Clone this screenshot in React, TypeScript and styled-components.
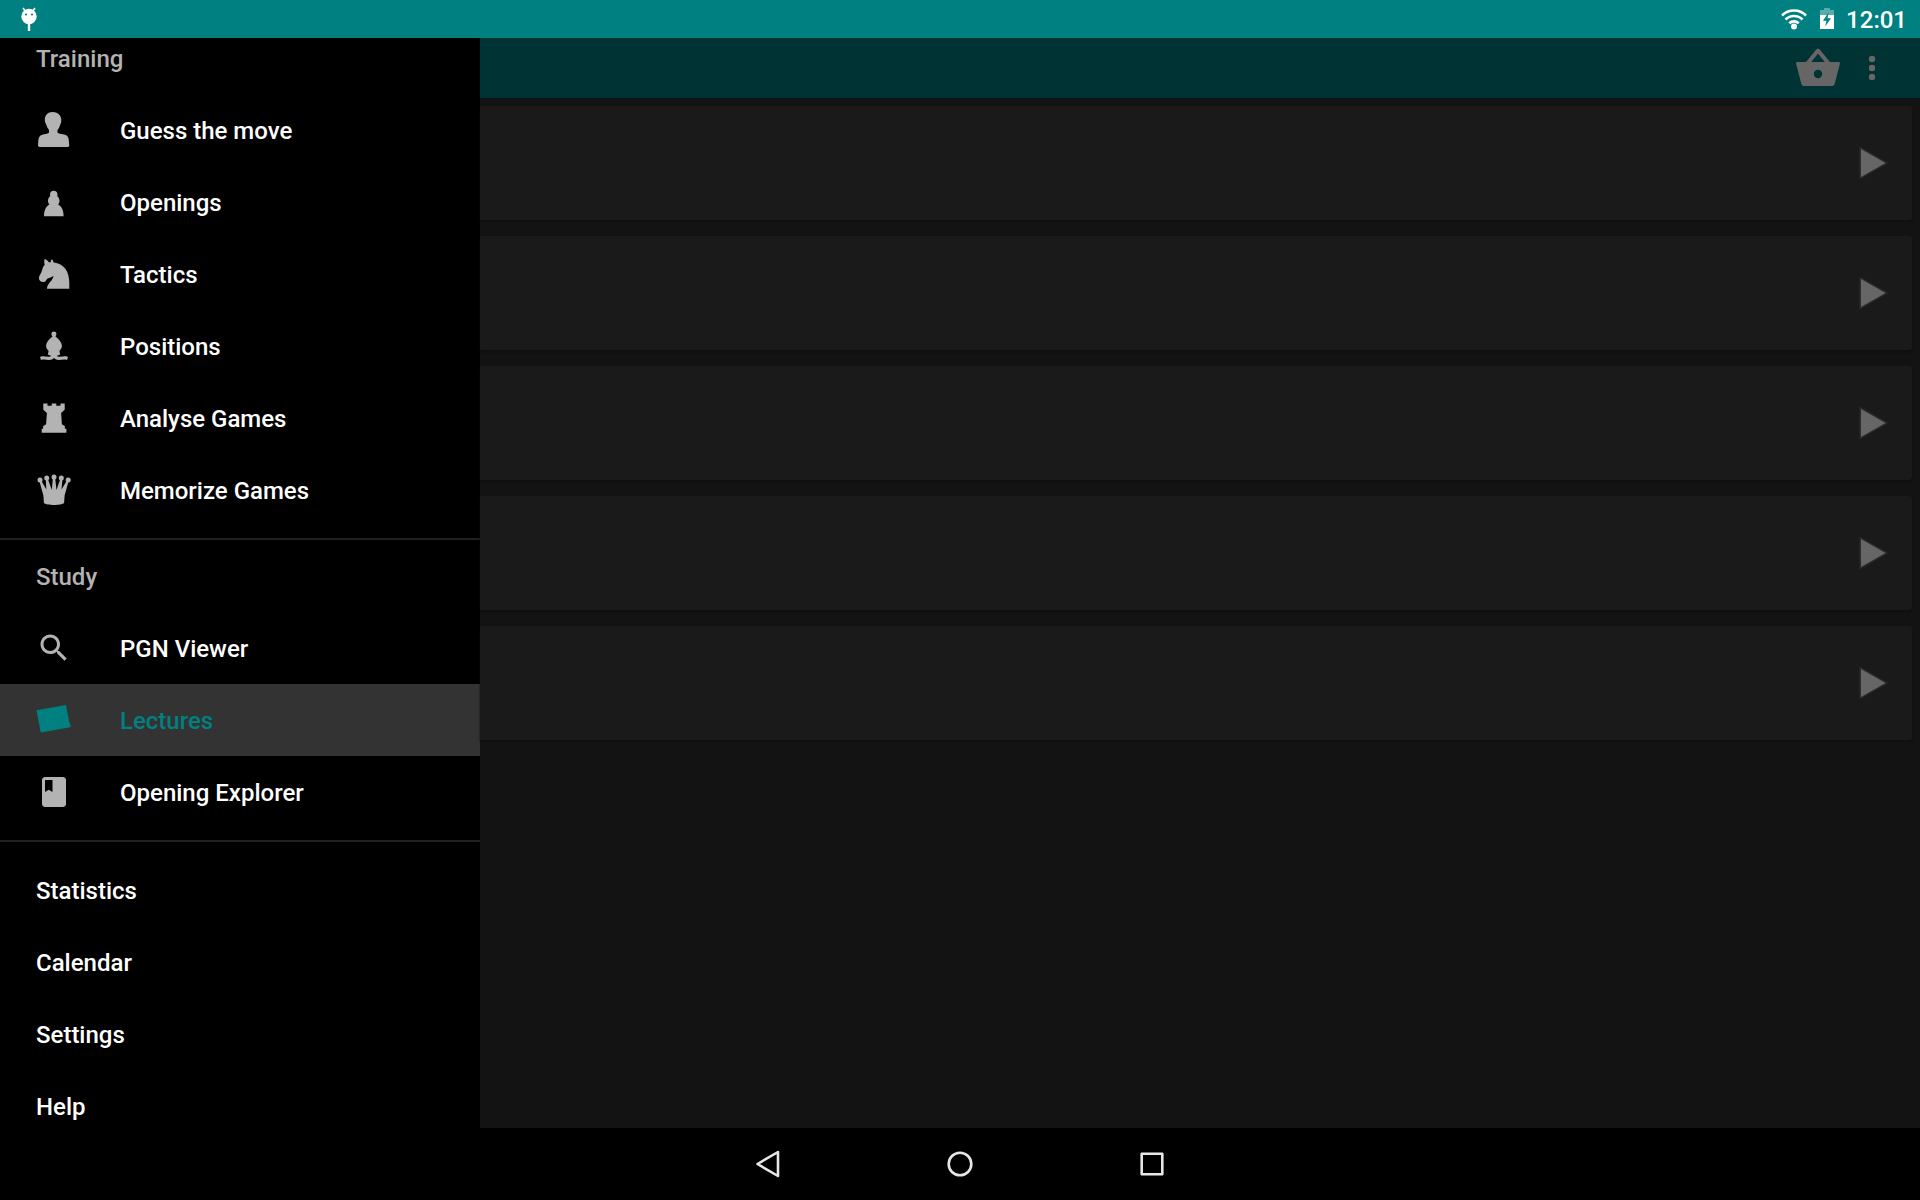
import React from "react";
import styled, { createGlobalStyle } from "styled-components";

const GlobalStyle = createGlobalStyle`
  *, *::before, *::after { box-sizing: border-box; }
  body { margin: 0; background: #000; font-family: Roboto, "Liberation Sans", sans-serif; }
  ul { list-style: none; margin: 0; padding: 0; }
  h2 { margin: 0; }
  button { border: 0; padding: 0; background: none; color: inherit; font: inherit; cursor: pointer; }
  svg { display: block; flex: none; }
`;

const Screen = styled.div`
  display: flex;
  flex-direction: column;
  height: 100vh;
  overflow: hidden;
  background: #000;
`;

const StatusBar = styled.header`
  flex: none;
  display: flex;
  align-items: center;
  justify-content: space-between;
  height: 38px;
  padding: 0 13px 0 20px;
  background: #008080;
  color: #fff;
`;

const StatusIcons = styled.div`
  display: flex;
  align-items: center;
  gap: 12px;
`;

const Clock = styled.time`
  padding-top: 2px;
  font-size: 24px;
  font-weight: 500;
  line-height: 36px;
`;

const Body = styled.div`
  flex: 1;
  display: flex;
  min-height: 0;
`;

const Drawer = styled.nav`
  flex: none;
  width: 480px;
  overflow: hidden;
  background: #000;
`;

const DrawerList = styled.div`
  margin-top: -16px;
`;

const Section = styled.section`
  & + & {
    margin-top: 12px;
    border-top: 2px solid #212121;
  }
`;

const Subheader = styled.h2`
  padding: 2px 36px 0;
  color: #b3b3b3;
  font-size: 24px;
  font-weight: 500;
  line-height: 70px;
`;

const PlainList = styled.ul`
  && { padding-top: 12px; }
`;

const Item = styled.a<{ $active?: boolean }>`
  display: flex;
  align-items: center;
  gap: 48px;
  height: 72px;
  padding: 0 36px;
  background: ${(p) => (p.$active ? "#333" : "transparent")};
  color: ${(p) => (p.$active ? "#008080" : "#fff")};
  text-decoration: none;

  svg { fill: ${(p) => (p.$active ? "#008080" : "#b3b3b3")}; }
`;

const ItemLabel = styled.span`
  padding-top: 2px;
  font-size: 24px;
  font-weight: 500;
  line-height: 70px;
`;

const Main = styled.main`
  flex: 1;
  display: flex;
  flex-direction: column;
  min-width: 0;
  background: #131313;
`;

const Toolbar = styled.div`
  flex: none;
  display: flex;
  align-items: center;
  justify-content: flex-end;
  height: 60px;
  padding-right: 24px;
  background: #003333;
`;

const ToolButton = styled.button<{ $width: number }>`
  display: flex;
  align-items: center;
  justify-content: center;
  width: ${(p) => p.$width}px;
  height: 60px;

  svg { fill: #666; }
`;

const CardList = styled.ul`
  && {
    display: flex;
    flex-direction: column;
    gap: 16px;
    padding: 8px 8px 8px 0;
  }
`;

const Card = styled.li`
  display: flex;
  align-items: center;
  justify-content: flex-end;
  height: 114px;
  padding-right: 22px;
  border-radius: 0 3px 3px 0;
  background: #1a1a1a;
  box-shadow: 0 2px 2px #0f0f0f;
`;

const PlayButton = styled.button`
  display: flex;
  align-items: center;
  justify-content: center;
  width: 36px;
  height: 48px;
`;

const NavBar = styled.footer`
  flex: none;
  display: flex;
  justify-content: center;
  height: 72px;
  background: #000;
`;

const NavButton = styled.button`
  display: flex;
  align-items: center;
  justify-content: center;
  width: 192px;

  svg {
    fill: none;
    stroke: #e6e6e6;
    stroke-width: 2.6;
    stroke-linejoin: round;
  }
`;

const PieceIcon = ({ children, box = 36 }: { children: React.ReactNode; box?: number }) => (
  <svg width="36" height="36" viewBox={`0 0 ${box} ${box}`} aria-hidden="true">
    {children}
  </svg>
);

const training = [
  {
    label: "Guess the move",
    icon: (
      <PieceIcon>
        <path d="M16.500 0C21.500 0 25.300 3.200 25.300 8c0 2.200-.4 3.300-1 4.500-.6 2.200-1.500 4-2.800 5.500v2.800c2 1.200 5 1.200 7.500 2 2.600.9 3.500 2.700 3.800 5.200l.4 5c.1 1.400-.7 2-2 2H4c-1.400 0-2.100-.7-2-2l.4-5c.3-2.500 1.200-4.300 3.800-5.200 2.500-.8 4.800-.8 6.800-2V18c-1.200-1.500-2.200-3.300-2.800-5.500C9.600 11.300 8.800 10.200 8.800 8c0-4.800 3-8 7.700-8z" />
      </PieceIcon>
    ),
  },
  {
    label: "Openings",
    icon: (
      <PieceIcon>
        <path d="M17.700 6.700c2.300 0 3.800 1.600 3.800 3.700 0 .7-.1 1.200-.3 1.700 1.500 1.200 2.300 2.900 2.300 4.700 0 1.500-.5 2.700-1.400 3.700 3.400 1.700 5.500 5.700 5.500 11.700H8c0-6 2.200-10 5.400-11.700-.9-1-1.400-2.200-1.400-3.700 0-1.800.8-3.500 2.300-4.700-.2-.5-.3-1-.3-1.700 0-2.100 1.400-3.700 3.700-3.700z" />
      </PieceIcon>
    ),
  },
  {
    label: "Tactics",
    icon: (
      <PieceIcon>
        <path d="M8.600 3c2 .6 3.200 1.900 4.300 3.300h1.900c-.1-1.300.2-2 1-3 .9.700 1.500 1.900 1.800 3.100 10.400 1.100 15.700 8.800 15.700 20.300v6H11c0-5.500 5.500-7 6.600-12.900-2 1.800-4.200 2-5.900 2.700-1.500.7-1.600 2.600-2.800 3.200-1.700.7-3.600.3-4.800-.8-1.300-1.300-1.400-3.700-.6-5.200 1.200-2.400 2.200-3.600 2.700-6 .3-1.800 1-3.500 2.500-5-.5-1.500-.7-3.700-.1-5.700z" />
      </PieceIcon>
    ),
  },
  {
    label: "Positions",
    icon: (
      <PieceIcon>
        <circle cx="17.900" cy="6" r="2.500" />
        <path d="M18 6.700c1 2 7.900 5.600 7.900 11.300 0 2.200-1.300 3.500-2.500 4.900l.7 3.300c-.4.900-2.100 1.300-3.300 1.600.6.700 1.200 1 2.500 1l4-.4c1.800-.1 3.200 0 4.700.5L31 32c-3-.9-5.600 0-8.300 0-2 0-3.500-.7-4.700-2-1.200 1.300-2.700 2-4.700 2-2.700 0-5.300-.9-8.300 0l-1-3.100c1.500-.5 2.900-.6 4.700-.5l4 .4c1.300 0 1.900-.3 2.500-1-1.200-.3-2.900-.7-3.300-1.600l.7-3.300c-1.200-1.400-2.500-2.700-2.500-4.900C10.100 12.300 17 8.700 18 6.700z" />
      </PieceIcon>
    ),
  },
  {
    label: "Analyse Games",
    icon: (
      <PieceIcon>
        <path d="M7.300 3.400h4.200v2.300h4.200V3.400h4.600v2.300h4.200V3.400h4.200v6.300l-3.600 3.200.8 11.400 3 2v2.500h1.500v4H5.700v-4h1.400v-2.500l3-2 .8-11.400-3.600-3.200z" />
      </PieceIcon>
    ),
  },
  {
    label: "Memorize Games",
    icon: (
      <PieceIcon>
        <circle cx="4" cy="8" r="2.500" />
        <circle cx="10.700" cy="6" r="2.500" />
        <circle cx="18" cy="5" r="2.500" />
        <circle cx="25.300" cy="6" r="2.500" />
        <circle cx="32.200" cy="8" r="2.500" />
        <path d="M3.200 8.500l1.600-.5 5.600 9.500-.7-11h2l4.100 11.500L17 5h2l1.500 13 4-11.500h2l-1 11L31.200 8l1.600.5-4.200 15-.5 7.500c-3 2.600-17.200 2.600-20.200 0l-.5-7.500z" />
      </PieceIcon>
    ),
  },
];

const study = [
  {
    label: "PGN Viewer",
    icon: (
      <PieceIcon box={24}>
        <path d="M15.500 14h-.79l-.28-.27C15.410 12.590 16 11.110 16 9.500 16 5.910 13.090 3 9.500 3S3 5.910 3 9.500 5.910 16 9.500 16c1.610 0 3.090-.59 4.230-1.570l.27.28v.79l5 4.990L20.490 19l-4.990-5zm-6 0C7.010 14 5 11.990 5 9.500S7.010 5 9.500 5 14 7.010 14 9.500 11.990 14 9.500 14z" />
      </PieceIcon>
    ),
  },
  {
    label: "Lectures",
    active: true,
    icon: (
      <PieceIcon>
        <path d="M.6 8.300L30 3l3.200 16.800 1.500 3.700c.2 1-.6 1.700-1.700 1.900L4.700 30.400z" />
      </PieceIcon>
    ),
  },
  {
    label: "Opening Explorer",
    icon: (
      <PieceIcon box={24}>
        <path d="M18 2H6c-1.100 0-2 .9-2 2v16c0 1.100.9 2 2 2h12c1.100 0 2-.9 2-2V4c0-1.100-.9-2-2-2zM6 4h5v8l-2.500-1.500L6 12V4z" />
      </PieceIcon>
    ),
  },
];

const more = ["Statistics", "Calendar", "Settings", "Help"];
const lectures = [1, 2, 3, 4, 5];

type Entry = { label: string; icon: React.ReactNode; active?: boolean };

const Entries = ({ items }: { items: Entry[] }) => (
  <ul>
    {items.map((item) => (
      <li key={item.label}>
        <Item href="#" $active={item.active} aria-current={item.active ? "page" : undefined}>
          {item.icon}
          <ItemLabel>{item.label}</ItemLabel>
        </Item>
      </li>
    ))}
  </ul>
);

export default function App() {
  return (
    <Screen>
      <GlobalStyle />
      <StatusBar>
        <svg width="18" height="24" viewBox="0 0 18 24" aria-hidden="true">
          <path d="M3 1l3 4M15 1l-3 4" stroke="#fff" strokeWidth="1.600" />
          <circle cx="9" cy="9.500" r="7.700" fill="#fff" />
          <path d="M9 17v7" stroke="#fff" strokeWidth="2.400" />
          <circle cx="6" cy="7.500" r="1.100" fill="#008080" />
          <circle cx="12" cy="7.500" r="1.100" fill="#008080" />
        </svg>
        <StatusIcons>
          <svg width="28" height="24" viewBox="0 0 28 24" fill="none" stroke="#fff" strokeWidth="2.600" aria-hidden="true">
            <path d="M2 8.500a17 17 0 0 1 24 0M5.500 12.500a12 12 0 0 1 17 0M9.300 16.300a6.800 6.800 0 0 1 9.400 0" />
            <circle cx="14" cy="19.500" r="3" fill="#fff" stroke="none" />
          </svg>
          <svg width="14" height="24" viewBox="0 0 14 24" aria-hidden="true">
            <path d="M4 1h6v2h4v5H0V3h4z" fill="#fff" fillOpacity=".35" />
            <path d="M0 8h14v14H0z" fill="#fff" />
            <path d="M8.700 5L3 13.700h3.500L5.200 19.500 11 11.300H7.500z" fill="#008080" />
          </svg>
          <Clock>12:01</Clock>
        </StatusIcons>
      </StatusBar>

      <Body>
        <Drawer aria-label="Main menu">
          <DrawerList>
            <Section>
              <Subheader>Training</Subheader>
              <Entries items={training} />
            </Section>
            <Section>
              <Subheader>Study</Subheader>
              <Entries items={study} />
            </Section>
            <Section>
              <PlainList>
                {more.map((label) => (
                  <li key={label}>
                    <Item href="#">
                      <ItemLabel>{label}</ItemLabel>
                    </Item>
                  </li>
                ))}
              </PlainList>
            </Section>
          </DrawerList>
        </Drawer>

        <Main>
          <Toolbar>
            <ToolButton $width={60} aria-label="Shop">
              <svg width="44" height="40" viewBox="0 0 44 40" aria-hidden="true">
                <path d="M11 16L22 2.500 33 16" style={{ fill: "none" }} stroke="#666" strokeWidth="4" strokeLinejoin="round" />
                <path
                  fillRule="evenodd"
                  d="M1.500 14h41c1 0 1.700.8 1.400 1.800l-5.200 20c-.4 1.500-1.500 2.200-2.900 2.200H8.200c-1.400 0-2.500-.7-2.900-2.200L.1 15.800C-.2 14.800.5 14 1.500 14zM22 21.800a4.200 4.200 0 1 0 0 8.400 4.200 4.200 0 1 0 0-8.400z"
                />
              </svg>
            </ToolButton>
            <ToolButton $width={48} aria-label="More options">
              <svg width="8" height="26" viewBox="0 0 8 26" aria-hidden="true">
                <circle cx="4" cy="4" r="3.200" />
                <circle cx="4" cy="13" r="3.200" />
                <circle cx="4" cy="22" r="3.200" />
              </svg>
            </ToolButton>
          </Toolbar>
          <CardList>
            {lectures.map((n) => (
              <Card key={n}>
                <PlayButton aria-label={`Open lecture ${n}`}>
                  <svg width="32" height="36" viewBox="0 0 32 36" aria-hidden="true">
                    <path d="M5 4v28L29.500 18z" fill="#666" stroke="#2b2b2b" strokeWidth="3" paintOrder="stroke" />
                  </svg>
                </PlayButton>
              </Card>
            ))}
          </CardList>
        </Main>
      </Body>

      <NavBar>
        <NavButton aria-label="Back">
          <svg width="26" height="30" viewBox="0 0 26 30">
            <path d="M23 3v24L2.500 15z" />
          </svg>
        </NavButton>
        <NavButton aria-label="Home">
          <svg width="26" height="26" viewBox="0 0 26 26">
            <circle cx="13" cy="13" r="11.300" />
          </svg>
        </NavButton>
        <NavButton aria-label="Recent apps">
          <svg width="26" height="26" viewBox="0 0 26 26">
            <path d="M2.700 2.700h20.600v20.600H2.700z" />
          </svg>
        </NavButton>
      </NavBar>
    </Screen>
  );
}
